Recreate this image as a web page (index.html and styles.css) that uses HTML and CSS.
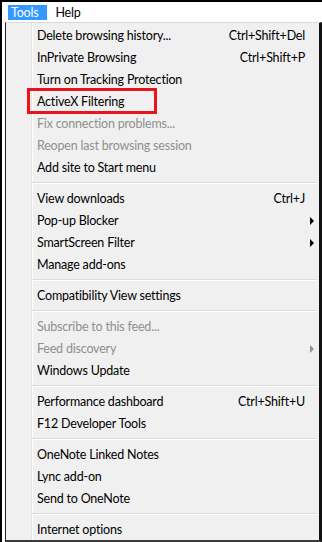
FILE: index.html
```html
<!DOCTYPE html>
<html lang="en">
<head>
  <meta charset="UTF-8" />
  <title>Tools menu</title>
  <link rel="stylesheet" href="styles.css">
</head>
<body>
  <div class="window">
    <div class="menubar">
      <span class="top active">Tools</span>
      <span class="top">Help</span>
    </div>

    <div class="menu">
      <div class="item"><span>Delete browsing history...</span><span class="key">Ctrl+Shift+Del</span></div>
      <div class="item"><span>InPrivate Browsing</span><span class="key">Ctrl+Shift+P</span></div>
      <div class="item"><span>Turn on Tracking Protection</span></div>
      <div class="item marked"><span>ActiveX Filtering</span></div>
      <div class="item off"><span>Fix connection problems...</span></div>
      <div class="item off"><span>Reopen last browsing session</span></div>
      <div class="item"><span>Add site to Start menu</span></div>
      <div class="sep"></div>
      <div class="item"><span>View downloads</span><span class="key">Ctrl+J</span></div>
      <div class="item"><span>Pop-up Blocker</span><span class="arrow"></span></div>
      <div class="item"><span>SmartScreen Filter</span><span class="arrow"></span></div>
      <div class="item"><span>Manage add-ons</span></div>
      <div class="sep"></div>
      <div class="item"><span>Compatibility View settings</span></div>
      <div class="sep"></div>
      <div class="item off"><span>Subscribe to this feed...</span></div>
      <div class="item off"><span>Feed discovery</span><span class="arrow"></span></div>
      <div class="item"><span>Windows Update</span></div>
      <div class="sep"></div>
      <div class="item"><span>Performance dashboard</span><span class="key">Ctrl+Shift+U</span></div>
      <div class="item"><span>F12 Developer Tools</span></div>
      <div class="sep"></div>
      <div class="item"><span>OneNote Linked Notes</span></div>
      <div class="item"><span>Lync add-on</span></div>
      <div class="item"><span>Send to OneNote</span></div>
      <div class="sep"></div>
      <div class="item"><span>Internet options</span></div>
    </div>
  </div>
</body>
</html>
```

FILE: styles.css
```css
html, body {
  margin: 0;
  padding: 0;
  background: #fff;
}
body {
  font-family: 'Lato', 'Noto Sans', sans-serif;
  font-size: 12.5px;
  letter-spacing: -0.2px;
  color: #000;
}
.window {
  width: 322px;
  height: 542px;
  box-sizing: border-box;
  border-left: 2px solid #000;
  border-top: 2px solid #000;
  display: flex;
  flex-direction: column;
  overflow: hidden;
}
.menubar {
  height: 20px;
  flex-shrink: 0;
  display: flex;
  align-items: center;
  padding-left: 6px;
  background: #fff;
}
.top {
  height: 15px;
  line-height: 15px;
  padding: 0 9px 0 3px;
}
.top.active {
  background: #3399ff;
  color: #fff;
  margin-right: 5px;
}
.menu {
  flex: 1;
  min-height: 0;
  margin-left: 3px;
  border-top: 1px solid #d9d9d9;
  border-left: 1px solid #222;
  border-right: 3px solid #111;
  border-bottom: 2px solid #3a3a3a;
  padding-top: 1px;
  background: linear-gradient(to right, transparent 25px, #e2e3e3 25px, #e2e3e3 26px, #fff 26px, #fff 27px, transparent 27px), #f0f0f0;
}
.item {
  height: 22px;
  box-sizing: border-box;
  padding: 1px 1px 0 31px;
  display: flex;
  align-items: center;
  position: relative;
}
.item .key {
  margin-left: auto;
  margin-right: 13px;
}
.item.off {
  color: #8f8f8f;
}
.arrow {
  margin-left: auto;
  margin-right: 4px;
  width: 0;
  height: 0;
  border-left: 4px solid #000;
  border-top: 4px solid transparent;
  border-bottom: 4px solid transparent;
}
.off .arrow {
  border-left-color: #8f8f8f;
}
.sep {
  height: 9px;
  margin: 0 2px 0 26px;
  display: flex;
  flex-direction: column;
  justify-content: center;
}
.sep::before {
  content: "";
  display: block;
  border-top: 1px solid #dcdcdc;
  border-bottom: 1px solid #fff;
}
.marked::after {
  content: "";
  position: absolute;
  left: 21px;
  top: -2px;
  width: 130px;
  height: 26px;
  box-sizing: border-box;
  border: 3px solid #e8131b;
}
```
